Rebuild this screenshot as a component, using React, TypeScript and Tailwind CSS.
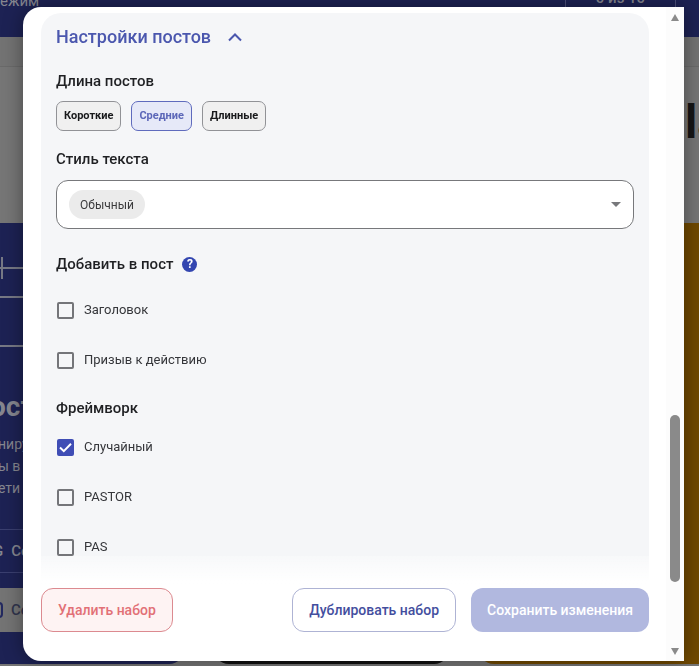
import React, { useState } from 'react';

const font = "font-['Roboto','Noto_Sans',sans-serif]";

function Check({ label, checked, onChange }: { label: string; checked: boolean; onChange: () => void }) {
  return (
    <label className="flex h-[50px] items-center gap-2.5 pl-px text-[13px] text-[#35363a]">
      <span className="relative flex h-[17px] w-[17px]">
        <input
          type="checkbox"
          checked={checked}
          onChange={onChange}
          className="h-[17px] w-[17px] appearance-none rounded-xs border-2 border-[#747579] bg-transparent checked:border-[#3f4db5] checked:bg-[#3f4db5]"
        />
        {checked && (
          <svg viewBox="0 0 17 17" className="pointer-events-none absolute inset-0 h-[17px] w-[17px]" fill="none" stroke="white" strokeWidth="2">
            <path d="M3 8.5 L6.8 12.2 L14 4.8" />
          </svg>
        )}
      </span>
      {label}
    </label>
  );
}

function Backdrop() {
  return (
    <div className="h-screen overflow-hidden bg-[#767676] text-[#85868f]" aria-hidden="true">
      <header className="flex h-[37px] justify-between overflow-hidden bg-[#1d2254] text-[15px] leading-4">
        <span className="-mt-[7px]">ежим</span>
        <span className="mr-[23px] flex h-9 w-[111px] justify-center border-x border-[#4c507a]">
          <span className="-mt-2.5 font-medium">0 из 10</span>
        </span>
      </header>
      <div className="h-[30px] border-b border-[#6a6a6a] bg-[#737373]" />
      <div className="flex h-[156px] justify-end overflow-hidden pt-8 text-[#151515]">
        <h1 className="-mr-3.5 w-7 text-[46px] leading-[46px] font-bold whitespace-nowrap">la</h1>
      </div>
      <div className="-mr-4 -ml-[52px] grid h-[441px] grid-cols-3 gap-7">
        <section className="overflow-hidden rounded-b-2xl bg-[#1d2254]">
          <svg viewBox="0 0 237 130" className="block h-[130px] w-full" fill="none" stroke="#777985" strokeWidth="2">
            <path d="M30 45H237M54 34V56M30 74H237M30 123H237" />
          </svg>
          <h2 className="ml-[42px] pt-9 text-[28px] leading-9 font-bold">ост</h2>
          <p className="ml-[50px] pt-2 text-sm leading-[22px]">
            ниру
            <br />ы в
            <br />ети
          </p>
          <div className="mt-[30px] flex h-11 items-center gap-2 border-y border-[#3a3f70] pl-[45px] text-[15px] font-medium">
            <span>G</span>
            <span>Со</span>
          </div>
          <div className="mt-[15px] flex h-11 items-center gap-2 bg-[#747474] pl-[35px] text-[15px] font-medium text-[#30344d]">
            <span className="h-4 w-5 rounded-sm border-2 border-[#232960]" />
            <span>Со</span>
          </div>
        </section>
        <section className="rounded-b-2xl bg-[#101010]" />
        <section className="rounded-b-2xl bg-[#704900]" />
      </div>
    </div>
  );
}

export default function App() {
  const [length, setLength] = useState('Средние');
  const [on, setOn] = useState<Record<string, boolean>>({ Случайный: true });
  const toggle = (k: string) => setOn({ ...on, [k]: !on[k] });
  const check = (k: string) => <Check key={k} label={k} checked={!!on[k]} onChange={() => toggle(k)} />;

  return (
    <div className={font}>
      <Backdrop />
      <div className="fixed inset-0 flex pt-[7px] pr-[15px] pb-[5px] pl-[23px]">
        <div role="dialog" aria-label="Настройки постов" className="flex min-w-0 flex-1 overflow-hidden rounded-l-[18px] bg-white shadow-[0_0_20px_rgba(0,0,0,0.4)]">
          <div className="flex min-w-0 flex-1 flex-col pt-1.5 pr-[17px] pl-[18px]">
            <section className="relative min-h-0 flex-1 overflow-hidden rounded-t-[20px] bg-[#f5f6f8] px-[15px] pt-3">
              <button type="button" aria-expanded="true" className="flex h-6 items-center gap-[17px] text-lg font-medium text-[#4b57ae]">
                Настройки постов
                <svg viewBox="0 0 14 9" className="h-[9px] w-3.5" fill="none" stroke="currentColor" strokeWidth="2">
                  <path d="M1 7.5 L7 1.5 L13 7.5" />
                </svg>
              </button>

              <h3 className="mt-5 text-[15px] leading-6 font-medium text-[#1f2023]">Длина постов</h3>
              <div className="mt-2 flex gap-2.5">
                {['Короткие', 'Средние', 'Длинные'].map((t) => (
                  <button
                    key={t}
                    type="button"
                    onClick={() => setLength(t)}
                    className={
                      length === t
                        ? 'h-[30px] rounded-[7px] border border-[#5f6bbd] bg-[#e6e9f8] px-[7px] text-[11px] font-bold text-[#5c67b8]'
                        : 'h-[30px] rounded-[7px] border border-[#919296] bg-[#f0f0f0] px-[7px] text-[11px] font-bold text-[#18191b]'
                    }
                  >
                    {t}
                  </button>
                ))}
              </div>

              <h3 id="style" className="mt-4 text-[15px] leading-6 font-medium text-[#1f2023]">Стиль текста</h3>
              <button type="button" aria-haspopup="listbox" aria-labelledby="style" className="mt-[9px] flex h-[49px] w-full items-center justify-between rounded-xl border border-[#77787b] bg-white px-3">
                <span className="flex h-[29px] items-center rounded-full bg-[#ebebeb] px-[11px] text-xs text-[#3b3b3d]">Обычный</span>
                <svg viewBox="0 0 10 5" className="h-[5px] w-2.5" fill="#77787b">
                  <path d="M0 0H10L5 5Z" />
                </svg>
              </button>

              <div className="mt-[23px] flex h-6 items-center gap-[9px]">
                <h3 className="text-[15px] leading-6 font-medium text-[#1f2023]">Добавить в пост</h3>
                <button type="button" aria-label="Подсказка" className="h-[15px] w-[15px] rounded-full bg-[#3346b0] text-xs leading-[15px] font-bold text-white">?</button>
              </div>
              <div className="mt-[9px]">{['Заголовок', 'Призыв к действию'].map(check)}</div>

              <h3 className="mt-[11px] text-[15px] leading-6 font-medium text-[#1f2023]">Фреймворк</h3>
              <div className="mt-0.5">{['Случайный', 'PASTOR', 'PAS'].map(check)}</div>
              <div className="pointer-events-none absolute inset-x-0 bottom-0 h-7 bg-linear-to-b from-white/30 to-white" />
            </section>

            <footer className="flex h-[77px] shrink-0 gap-[15px] pt-1 text-sm font-medium">
              <button type="button" className="h-11 rounded-xl border border-[#dc8a90] bg-[#fef3f3] px-4 text-[#e27076]">Удалить набор</button>
              <button type="button" className="ml-auto h-11 rounded-xl border border-[#aeb3d4] bg-white px-4 text-[#434e9e]">Дублировать набор</button>
              <button type="button" className="h-11 rounded-xl bg-[#b1b8df] px-4 text-white">Сохранить изменения</button>
            </footer>
          </div>

          <div className="flex w-[18px] flex-col items-center justify-between bg-[#fcfcfc] pt-[7px] pb-1.5" aria-hidden="true">
            <svg viewBox="0 0 8 7" className="h-[7px] w-2" fill="#8a8a8a"><path d="M4 0L8 7H0Z" /></svg>
            <div className="flex w-full flex-1 flex-col items-center">
              <div className="flex-[394]" />
              <div className="w-[10px] flex-[167] rounded-full bg-[#8a8a8a]" />
              <div className="flex-[66]" />
            </div>
            <svg viewBox="0 0 8 7" className="h-[7px] w-2" fill="#8a8a8a"><path d="M0 0H8L4 7Z" /></svg>
          </div>
        </div>
      </div>
    </div>
  );
}
